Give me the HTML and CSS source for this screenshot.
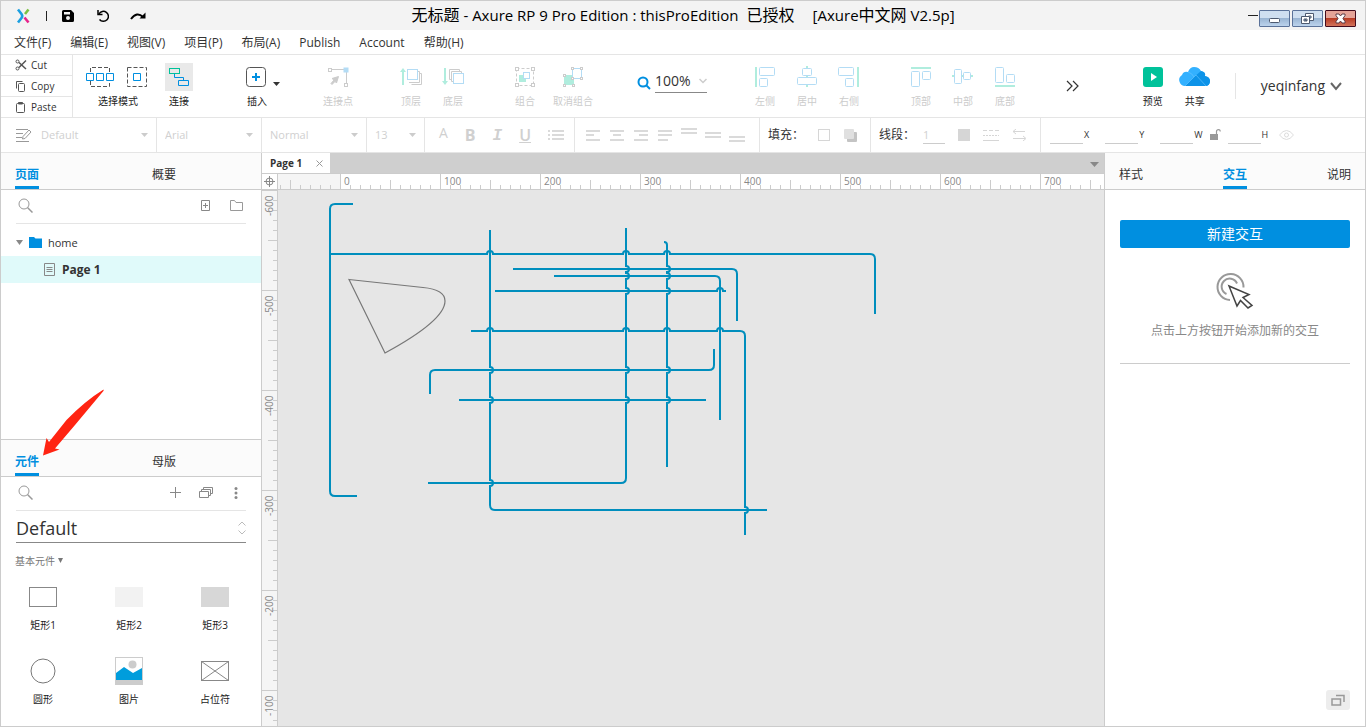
FILE: index.html
```
<!DOCTYPE html>
<html lang="zh-CN">
<head>
<meta charset="utf-8">
<title>无标题 - Axure RP 9 Pro Edition</title>
<link rel="stylesheet" href="styles.css">
</head>
<body>
<div class="app">
  <header class="titlebar">
    <div class="quick">
      <svg class="logo" width="14" height="16" viewBox="0 0 14 16" fill="none" stroke-width="2.600"><path d="M2 1.500L5.500 6Q7 8 5.500 10L2 14.500" stroke="#1b9fe0"/><path d="M12.500 1.500L9 6" stroke="#7bc143"/><path d="M8.500 9.500L12.500 14.500" stroke="#e6248c"/></svg>
      <span class="quick-sep"></span>
      <button aria-label="保存"><svg width="12" height="12" viewBox="0 0 12 12"><path fill-rule="evenodd" d="M1.500 0H9L12 3V10.500Q12 12 10.500 12H1.500Q0 12 0 10.500V1.500Q0 0 1.500 0ZM2 2V4.500H8V2ZM6 6A2 2 0 1 0 6 10A2 2 0 1 0 6 6Z"/></svg></button>
      <button aria-label="撤销"><svg width="14" height="14" viewBox="0 0 14 14" fill="none" stroke="#000" stroke-width="1.500"><path d="M4 5A5 5 0 1 1 4.500 10.500"/><path d="M3 1V5.500H7.500"/></svg></button>
      <button aria-label="重做"><svg width="16" height="14" viewBox="0 0 16 14" fill="none" stroke="#000" stroke-width="2"><path d="M1 10Q7 2 13 8"/><path d="M15.500 3.500V9.500H9.500Z" fill="#000" stroke="none"/></svg></button>
    </div>
    <h1 class="title"><span>无标题</span><span class="latin">- Axure RP 9 Pro Edition : thisProEdition</span><span class="licence">已授权</span><span class="latin">[Axure<span class="han">中文网</span> V2.5p]</span></h1>
    <div class="window-buttons">
      <span class="dash"></span>
      <button class="win" aria-label="最小化"><svg width="29" height="15" viewBox="0 0 29 15"><rect x="9.500" y="7.500" width="10" height="4" rx="1" fill="#fff" stroke="#4d5a70"/></svg></button>
      <button class="win" aria-label="还原"><svg width="29" height="15" viewBox="0 0 29 15" fill="#fff" stroke="#4d5a70"><path fill-rule="evenodd" d="M12.500 2.500H20.500V9.500H12.500ZM15.500 5V7H18V5Z"/><path fill-rule="evenodd" d="M8.500 5.500H16.500V12.500H8.500ZM11 8V10H14V8Z"/></svg></button>
      <button class="win win-close" aria-label="关闭"><svg width="29" height="15" viewBox="0 0 29 15"><path d="M10 3H13L14.500 5L16 3H19V4.500L17 7.500L19 10.500V12H16L14.500 10L13 12H10V10.500L12 7.500L10 4.500Z" fill="#fff" stroke="#5b3a45"/></svg></button>
    </div>
  </header>

  <nav class="menubar">
    <button>文件(F)</button><button>编辑(E)</button><button>视图(V)</button><button>项目(P)</button><button>布局(A)</button><button>Publish</button><button>Account</button><button>帮助(H)</button>
  </nav>

  <div class="toolbar">
    <div class="clipboard">
      <button><svg width="12" height="12" viewBox="0 0 12 12" fill="none" stroke="#555"><circle cx="2.500" cy="2.500" r="1.500"/><circle cx="2.500" cy="9.500" r="1.500"/><path d="M4 3.500L11 10M4 8.500L11 1.500" stroke-width="1.500"/></svg>Cut</button>
      <button><svg width="12" height="12" viewBox="0 0 12 12" fill="none" stroke="#555"><path d="M1.500 8.500V1.500H7.500"/><rect x="3.500" y="3.500" width="6" height="8" rx="1"/></svg>Copy</button>
      <button><svg width="12" height="12" viewBox="0 0 12 12" fill="none" stroke="#555"><rect x="1.500" y="2.500" width="8" height="9" rx="1"/><path d="M3.500 3V1.500H7.500V3Z" fill="#555"/></svg>Paste</button>
    </div>
    <div class="tools">
      <button class="tool tool-wide"><svg width="68" height="28" viewBox="84 63 68 28" fill="none"><g stroke="#555" stroke-dasharray="4 2"><path d="M90.500 72V67.500H109.500V72M90.500 81V86.500H109.500V81M127.500 67.500H146.500V86.500H127.500Z"/></g><g stroke="#008fe0" fill="#fff"><path d="M86.500 73.500H93.500V80.500H86.500ZM96.500 73.500H103.500V80.500H96.500ZM106.500 73.500H113.500V80.500H106.500ZM133.500 73.500H140.500V80.500H133.500Z"/></g></svg>选择模式</button>
      <button class="tool"><svg class="pressed" width="28" height="28" viewBox="165 63 28 28" fill="none"><rect x="169.500" y="68.500" width="10" height="5" stroke="#00c29a"/><path d="M174.500 74V77.500H183.500V80M178.500 80.500H188.500V85.500H178.500Z" stroke="#008fe0"/></svg>连接</button>
      <button class="tool tool-insert"><svg width="42" height="28" viewBox="236 63 42 28" fill="none"><rect x="246.500" y="67.500" width="19" height="19" rx="3" stroke="#555"/><path d="M256 73V81M252 77H260" stroke="#008fe0" stroke-width="2"/><path d="M273 82H280L276.500 86Z" fill="#333"/></svg>插入</button>
      <button class="tool tool-point" disabled><svg width="28" height="28" viewBox="324 63 28 28" fill="none" stroke="#ccc"><path d="M332 69.500H344M346.500 72V83"/><rect x="328.500" y="68.500" width="3" height="3"/><rect x="344.500" y="83.500" width="3" height="3"/><rect x="344" y="68" width="4" height="4" fill="#b3dcf5" stroke="#b3dcf5"/><path d="M338.500 76.500L336.500 83L335 81.500L332 84.500L331 83.500L334 80L332 78.500Z" fill="#ccc"/></svg>连接点</button>
      <div class="toolset">
        <button class="tool" disabled><svg width="28" height="28" viewBox="397 63 28 28" fill="none"><path d="M403 85V71" stroke="#b0edde" stroke-width="2"/><path d="M400 72L403 68L406 72Z" fill="#b0edde"/><path d="M409 82.500H419.500V71.500H418M411.500 84.500H421.500V73.500H420" stroke="#ccc"/><rect x="407.500" y="69.500" width="10" height="10" stroke="#b3dcf5"/></svg>顶层</button>
        <button class="tool" disabled><svg width="28" height="28" viewBox="439 63 28 28" fill="none"><path d="M445 68V82" stroke="#b0edde" stroke-width="2"/><path d="M442 81L445 85L448 81Z" fill="#b0edde"/><path d="M451 79.500H449.500V69.500H459.500V71M453 81.500H451.500V71.500H461.500V73" stroke="#ccc"/><rect x="453.500" y="73.500" width="10" height="10" stroke="#b3dcf5"/></svg>底层</button>
      </div>
      <div class="toolset toolset-group">
        <button class="tool" disabled><svg width="28" height="28" viewBox="511 63 28 28" fill="none"><rect x="516.500" y="68.500" width="17" height="17" stroke="#ccc" stroke-dasharray="3 2"/><g fill="#fff" stroke="#ccc"><rect x="515.500" y="67.500" width="3" height="3"/><rect x="531.500" y="67.500" width="3" height="3"/><rect x="515.500" y="83.500" width="3" height="3"/><rect x="531.500" y="83.500" width="3" height="3"/></g><rect x="519" y="75" width="7" height="7" fill="#b0edde"/><rect x="523.500" y="72.500" width="6" height="6" fill="#fff" stroke="#b3dcf5"/></svg>组合</button>
        <button class="tool" disabled><svg width="28" height="28" viewBox="559 63 28 28" fill="none"><rect x="564" y="75" width="10" height="10" fill="#b0edde"/><rect x="572.500" y="68.500" width="9" height="10" fill="#fff" stroke="#b3dcf5"/><g fill="#fff" stroke="#ccc"><rect x="571.500" y="67.500" width="2" height="2"/><rect x="580.500" y="67.500" width="2" height="2"/><rect x="580.500" y="77.500" width="2" height="2"/><rect x="571.500" y="77.500" width="2" height="2"/><rect x="563.500" y="74.500" width="2" height="2"/><rect x="563.500" y="84.500" width="2" height="2"/><rect x="572.500" y="84.500" width="2" height="2"/></g></svg>取消组合</button>
      </div>
      <label class="zoom"><svg width="14" height="14" viewBox="0 0 14 14" fill="none" stroke="#008fe0" stroke-width="2"><circle cx="6" cy="6" r="4.500"/><path d="M9 9L13 13"/></svg>
        <span class="pick"><select aria-label="缩放"><option>100%</option></select><svg width="8" height="6" viewBox="0 0 8 6" fill="none" stroke="#ccc" stroke-width="1.500"><path d="M.5 1L4 4.500L7.500 1"/></svg></span></label>
      <div class="toolset">
        <button class="tool" disabled><svg width="28" height="28" viewBox="751 63 28 28" fill="none"><path d="M756 67V87" stroke="#b0edde" stroke-width="2"/><g stroke="#b3dcf5"><rect x="759.500" y="67.500" width="15" height="8" rx="1"/><rect x="759.500" y="78.500" width="8" height="8" rx="1"/></g></svg>左侧</button>
        <button class="tool" disabled><svg width="28" height="28" viewBox="793 63 28 28" fill="none"><path d="M807 66V87" stroke="#b0edde" stroke-width="2"/><g fill="#fff" stroke="#b3dcf5"><rect x="802.500" y="68.500" width="9" height="7" rx="1"/><rect x="797.500" y="77.500" width="19" height="7" rx="1"/></g></svg>居中</button>
        <button class="tool" disabled><svg width="28" height="28" viewBox="835 63 28 28" fill="none"><path d="M858 67V87" stroke="#b0edde" stroke-width="2"/><g stroke="#b3dcf5"><rect x="838.500" y="67.500" width="15" height="8" rx="1"/><rect x="845.500" y="78.500" width="8" height="8" rx="1"/></g></svg>右侧</button>
      </div>
      <div class="toolset toolset-vertical">
        <button class="tool" disabled><svg width="28" height="28" viewBox="907 63 28 28" fill="none"><path d="M911 68H931" stroke="#b0edde" stroke-width="2"/><g stroke="#b3dcf5"><rect x="911.500" y="71.500" width="8" height="15" rx="1"/><rect x="922.500" y="71.500" width="8" height="8" rx="1"/></g></svg>顶部</button>
        <button class="tool" disabled><svg width="28" height="28" viewBox="949 63 28 28" fill="none"><path d="M952 76H973" stroke="#b0edde" stroke-width="2"/><g fill="#fff" stroke="#b3dcf5"><rect x="954.500" y="69.500" width="7" height="14" rx="1"/><rect x="963.500" y="72.500" width="7" height="7" rx="1"/></g></svg>中部</button>
        <button class="tool" disabled><svg width="28" height="28" viewBox="991 63 28 28" fill="none"><path d="M995 86H1015" stroke="#b0edde" stroke-width="2"/><g stroke="#b3dcf5"><rect x="995.500" y="67.500" width="8" height="15" rx="1"/><rect x="1006.500" y="74.500" width="8" height="8" rx="1"/></g></svg>底部</button>
      </div>
      <button class="more" aria-label="更多"><svg width="14" height="12" viewBox="0 0 14 12" fill="none" stroke="#333" stroke-width="1.200"><path d="M1 1L6 6L1 11M7 1L12 6L7 11"/></svg></button>
    </div>
    <div class="account">
      <button class="tool"><svg width="28" height="28" viewBox="0 0 28 28"><rect x="4" y="4" width="20" height="20" rx="3" fill="#00c29a"/><path d="M12 10V18L18 14Z" fill="#fff"/></svg>预览</button>
      <button class="tool"><svg width="32" height="28" viewBox="0 0 32 28"><path d="M7 23A6 6 0 0 1 3 12A5 5 0 0 1 9 9Q11 4 15 4Q20 4 22 8Q27 9 26 13Q31 14 31 18Q31 23 26 23Z" fill="#33b1ff"/><path d="M6 23L15 14L22 8Q27 9 26 13Q31 14 31 18Q31 23 26 23Z" fill="#0d93e8"/><path d="M6 23L17 12L27 23M9 9Q13 10 15 14" fill="none" stroke="#6cc6ff" stroke-width=".6"/></svg>共享</button>
      <button class="user">yeqinfang<svg width="12" height="9" viewBox="0 0 12 9" fill="none" stroke="#666" stroke-width="2"><path d="M1 1L6 7L11 1"/></svg></button>
    </div>
  </div>

  <div class="formatbar">
    <div class="cell cell-style"><svg width="16" height="14" viewBox="0 0 16 14" fill="none" stroke="#999"><path d="M0 1.500H12M0 5.500H7M0 9.500H6M0 13.500H13M6.500 11L7 8.500L13 2L15 4L9 10.500Z"/></svg><span class="pick"><select aria-label="样式" disabled><option>Default</option></select><svg class="caret" width="7" height="4" viewBox="0 0 7 4"><path d="M0 0H7L3.500 4Z"/></svg></span></div>
    <div class="cell cell-font"><span class="pick"><select aria-label="字体" disabled><option>Arial</option></select><svg class="caret" width="7" height="4" viewBox="0 0 7 4"><path d="M0 0H7L3.500 4Z"/></svg></span></div>
    <div class="cell cell-font"><span class="pick"><select aria-label="字重" disabled><option>Normal</option></select><svg class="caret" width="7" height="4" viewBox="0 0 7 4"><path d="M0 0H7L3.500 4Z"/></svg></span></div>
    <div class="cell cell-size"><span class="pick"><select aria-label="字号" disabled><option>13</option></select><svg class="caret" width="7" height="4" viewBox="0 0 7 4"><path d="M0 0H7L3.500 4Z"/></svg></span></div>
    <div class="cell cell-letters"><button disabled class="color">A</button><button disabled><b>B</b></button><button disabled><i>I</i></button><button disabled><u>U</u></button><button disabled aria-label="列表"><svg width="16" height="12" viewBox="0 0 16 12" stroke="#dadada" stroke-width="2"><path d="M0 2H2M4 2H16M0 6H2M4 6H16M0 10H2M4 10H16"/></svg></button></div>
    <div class="cell cell-align">
      <button disabled aria-label="左对齐"><svg width="16" height="14" viewBox="0 0 16 14"><path d="M1 3H15M1 7H9M1 12H15"/></svg></button>
      <button disabled aria-label="居中对齐"><svg width="16" height="14" viewBox="0 0 16 14"><path d="M1 3H15M4 7H12M1 12H15"/></svg></button>
      <button disabled aria-label="右对齐"><svg width="16" height="14" viewBox="0 0 16 14"><path d="M1 3H15M6 7H15M1 12H15"/></svg></button>
      <button disabled aria-label="两端对齐"><svg width="16" height="14" viewBox="0 0 16 14"><path d="M1 3H15M1 7H15M1 12H11"/></svg></button>
      <button disabled aria-label="顶端"><svg width="16" height="14" viewBox="0 0 16 14"><path d="M0 1H16M0 5H16"/></svg></button>
      <button disabled aria-label="中部"><svg width="16" height="14" viewBox="0 0 16 14"><path d="M0 5H16M0 9H16"/></svg></button>
      <button disabled aria-label="底端"><svg width="16" height="14" viewBox="0 0 16 14"><path d="M0 9H16M0 13H16"/></svg></button>
    </div>
    <div class="cell cell-fill"><span>填充：</span><button disabled aria-label="填充颜色"><svg width="12" height="12" viewBox="0 0 12 12"><rect x=".5" y=".5" width="11" height="11" fill="#fff" stroke="#d6d6d6"/></svg></button><button disabled aria-label="阴影"><svg width="13" height="13" viewBox="0 0 13 13"><rect x="3" y="3" width="10" height="10" rx="1" fill="#c4c4c4"/><rect width="10" height="10" rx="1" fill="#e0e0e0"/></svg></button></div>
    <div class="cell cell-line"><label for="line-width">线段：</label><input id="line-width" class="line-width" value="1" disabled><button disabled aria-label="线段颜色"><svg width="12" height="12" viewBox="0 0 12 12"><rect width="12" height="12" fill="#d6d6d6"/></svg></button><button disabled aria-label="线型"><svg width="16" height="12" viewBox="0 0 16 12" stroke="#d6d6d6"><path d="M0 1.500H16" stroke-dasharray="4 2"/><path d="M0 6.500H16" stroke-dasharray="2 1"/><path d="M0 11.500H16"/></svg></button><button disabled aria-label="箭头"><svg width="15" height="12" viewBox="0 0 15 12" fill="none" stroke="#d6d6d6"><path d="M13 2.500H1M4 0L1 2.500L4 5M1 9.500H13M11 7L14 9.500L11 12"/></svg></button></div>
    <div class="cell cell-place">
      <label><input disabled>X</label><label><input disabled>Y</label><label><input disabled>W</label>
      <svg width="11" height="12" viewBox="0 0 11 12"><rect y="5" width="8" height="6" fill="#999"/><path d="M6.500 5V2.500Q6.500 .7 8.500 .7T10 2.500" fill="none" stroke="#999" stroke-width="1.200"/></svg>
      <label><input disabled>H</label>
      <svg class="eye" width="15" height="10" viewBox="0 0 15 10" fill="none" stroke="#dcdcdc"><path d="M.5 5Q7.500 -4 14.500 5Q7.500 14 .5 5Z"/><circle cx="7.500" cy="5" r="2"/></svg>
    </div>
  </div>

  <main class="workspace">
    <aside class="left">
      <section class="pages">
        <div class="tabs"><button class="tab active">页面</button><button class="tab">概要</button></div>
        <div class="search"><svg width="16" height="16" viewBox="0 0 16 16" fill="none" stroke="#999"><circle cx="7" cy="6" r="5"/><path d="M10.500 9.500L15.500 14.500" stroke-width="1.500"/></svg><input type="search" aria-label="搜索页面">
          <button aria-label="添加页面"><svg width="16" height="14" viewBox="0 0 16 14" fill="none" stroke="#888"><path d="M4.500 1.500H12.500V11.500H4.500ZM8.500 4V9M6 6.500H11"/></svg></button>
          <button aria-label="添加文件夹"><svg width="14" height="14" viewBox="0 0 14 14" fill="none" stroke="#999"><path d="M.5 1.500H4.500L6 3.500H12.500V11.500H.5Z"/></svg></button></div>
        <ul class="tree">
          <li><svg width="7" height="5" viewBox="0 0 7 5"><path d="M0 0H7L3.500 5Z" fill="#888"/></svg><svg class="folder" width="13" height="11" viewBox="0 0 13 11"><path d="M0 0H5L6.500 1.500H13V11H0Z" fill="#008fe0"/></svg>home</li>
          <li class="selected"><svg width="11" height="13" viewBox="0 0 11 13" fill="none" stroke="#888"><path d="M.5 .5H10.500V12.500H.5ZM2.500 4.500H8.500M2.500 6.500H8.500M2.500 8.500H8.500"/></svg>Page 1</li>
        </ul>
      </section>
      <section class="library">
        <div class="tabs"><button class="tab active">元件</button><button class="tab">母版</button>
          <svg class="pointer" width="62" height="67" viewBox="43 389 62 67"><path d="M103.500 389.500Q104 391 103 391.500L75 425L55 448.500L59.500 449.500L43 455.500L46.500 438L49 442L66.500 420Q85 401 103.500 389.500Z" fill="#ff2412"/></svg></div>
        <div class="search"><svg width="16" height="16" viewBox="0 0 16 16" fill="none" stroke="#999"><circle cx="7" cy="6" r="5"/><path d="M10.500 9.500L15.500 14.500" stroke-width="1.500"/></svg><input type="search" aria-label="搜索元件">
          <button aria-label="添加"><svg width="12" height="12" viewBox="0 0 12 12" stroke="#888"><path d="M5.500 0V11M0 5.500H11"/></svg></button>
          <button aria-label="元件库"><svg width="14" height="12" viewBox="0 0 14 12" fill="none" stroke="#888"><path d="M.5 4.500H9.500V10.500H.5ZM2.500 4V2.500H11.500V8.500H10M4.500 2V.5H13.500V6.500H12"/></svg></button>
          <button aria-label="选项"><svg width="14" height="12" viewBox="0 0 14 12" fill="#888"><circle cx="6" cy="1.500" r="1.500"/><circle cx="6" cy="6" r="1.500"/><circle cx="6" cy="10.500" r="1.500"/></svg></button></div>
        <div class="pick library-pick"><select aria-label="元件库"><option>Default</option></select><svg width="8" height="14" viewBox="0 0 8 14" fill="none" stroke="#bbb"><path d="M.5 4.500L4 1L7.500 4.500M.5 9.500L4 13L7.500 9.500"/></svg></div>
        <button class="category">基本元件<svg width="5" height="5" viewBox="0 0 5 5"><path d="M0 0H5L2.500 5Z" fill="#777"/></svg></button>
        <div class="widgets">
          <figure><svg width="28" height="28" viewBox="0 0 28 28"><rect x=".5" y="4.500" width="27" height="19" fill="#fff" stroke="#888"/></svg><figcaption>矩形1</figcaption></figure>
          <figure><svg width="28" height="28" viewBox="0 0 28 28"><rect y="4" width="28" height="20" fill="#f2f2f2"/></svg><figcaption>矩形2</figcaption></figure>
          <figure><svg width="28" height="28" viewBox="0 0 28 28"><rect y="4" width="28" height="20" fill="#d7d7d7"/></svg><figcaption>矩形3</figcaption></figure>
          <figure><svg width="28" height="28" viewBox="0 0 28 28"><circle cx="14" cy="14" r="12" fill="#fff" stroke="#777"/></svg><figcaption>圆形</figcaption></figure>
          <figure><svg width="28" height="28" viewBox="0 0 28 28"><rect x=".5" y=".5" width="27" height="27" fill="#fff" stroke="#ccc"/><circle cx="17.500" cy="7.500" r="4" fill="#ccc"/><path d="M1 16L9 10L18 16L27 11V23H1Z" fill="#009ddc"/><rect y="23" width="28" height="5" fill="#ccc"/></svg><figcaption>图片</figcaption></figure>
          <figure><svg width="28" height="28" viewBox="0 0 28 28" fill="#fff" stroke="#888"><rect x=".5" y="4.500" width="27" height="19"/><path d="M.5 4.500L27.500 23.500M27.500 4.500L.5 23.500"/></svg><figcaption>占位符</figcaption></figure>
        </div>
      </section>
    </aside>

    <section class="editor">
      <div class="doc-tabs"><button class="doc-tab">Page 1<svg width="7" height="7" viewBox="0 0 7 7" stroke="#999"><path d="M.5 .5L6.500 6.500M6.500 .5L.5 6.500"/></svg></button><svg class="doc-more" width="9" height="5" viewBox="0 0 9 5"><path d="M0 0H9L4.500 5Z" fill="#888"/></svg></div>
      <div class="sheet">
        <div class="origin"><svg width="11" height="11" viewBox="0 0 11 11" fill="none" stroke="#888"><circle cx="5.500" cy="5.500" r="3.500"/><path d="M5.500 0V11M0 5.500H11"/></svg></div>
        <div class="ruler-x"><span class="lead"></span><span>0</span><span>100</span><span>200</span><span>300</span><span>400</span><span>500</span><span>600</span><span>700</span></div>
        <div class="ruler-y"><span>-600</span><span>-500</span><span>-400</span><span>-300</span><span>-200</span><span>-100</span></div>
        <div class="canvas">
          <svg class="drawing" width="100%" height="100%"><g transform="translate(-278 -190)" fill="none" stroke="#008ebd" stroke-width="2">
            <path d="M353 204H335Q330 204 330 209V491Q330 496 335 496H357"/>
            <path d="M330 254H487C487 250 493 250 493 254H623C623 250 629 250 629 254H664C664 250 670 250 670 254H870Q875 254 875 259V314"/>
            <path d="M490 230V367C494 367 494 373 490 373V397C494 397 494 403 490 403V480C494 480 494 486 490 486V505Q490 510 495 510H767"/>
            <path d="M626 228V266C630 266 630 272 626 272V273C630 273 630 279 626 279V288C630 288 630 294 626 294V367C630 367 630 373 626 373V397C630 397 630 403 626 403V478Q626 483 621 483H428"/>
            <path d="M664 242Q667 242 667 245V266C671 266 671 272 667 272V273C671 273 671 279 667 279V288C671 288 671 294 667 294V367C671 367 671 373 667 373V397C671 397 671 403 667 403V467"/>
            <path d="M513 269H732Q737 269 737 274V321"/>
            <path d="M554 276H715Q720 276 720 281V420"/>
            <path d="M495 291H717C717 287 723 287 723 291H726"/>
            <path d="M471 331H487C487 327 493 327 493 331H623C623 327 629 327 629 331H664C664 327 670 327 670 331H717C717 327 723 327 723 331H740Q745 331 745 336V507C749 507 749 513 745 513V535"/>
            <path d="M430 394V375Q430 370 435 370H709Q714 370 714 365V349"/>
            <path d="M459 400H706"/>
            <path d="M349 279.500L423 287.500C440 289 445 295 445 301C445 315 420 334 385 353Z" stroke="#777" stroke-width="1.200"/>
          </g></svg>
        </div>
      </div>
    </section>

    <aside class="right">
      <div class="tabs tabs-even"><button class="tab">样式</button><button class="tab active">交互</button><button class="tab">说明</button></div>
      <div class="interactions">
        <button class="primary">新建交互</button>
        <svg width="38" height="38" viewBox="1216 272 38 38" fill="none"><g stroke="#999" stroke-width="2"><path d="M1230 300A13 13 0 1 1 1243.500 287.500"/><path d="M1226.500 294A8 8 0 1 1 1237 283.500"/></g><path d="M1229 286L1249 294.500L1243 297.500L1252 305.500L1248 308L1240.500 300.500L1237 306Z" fill="#fff" stroke="#444" stroke-width="1.500"/></svg>
        <p>点击上方按钮开始添加新的交互</p>
      </div>
      <button class="dock" aria-label="浮动面板"><svg width="14" height="12" viewBox="0 0 14 12" fill="none" stroke="#999" stroke-width="1.500"><path d="M1 5H9.500V11H1ZM5 1.500H13V8"/></svg></button>
    </aside>
  </main>
</div>
</body>
</html>
```
FILE: styles.css
```
* { box-sizing: border-box; }
body { margin: 0; font: 12px/16px "Open Sans", "Noto Sans CJK SC", sans-serif; color: #333; }
button, input, select { font: inherit; color: inherit; background: none; border: 0; padding: 0; margin: 0; border-radius: 0; }
svg { display: block; flex: none; }
select { appearance: none; opacity: 1; width: 100%; }
.app { height: 100vh; display: flex; flex-direction: column; border: 1px solid #ccc; overflow: hidden; background: #fff; }

.titlebar { flex: none; height: 29px; background: #f3f3f3; display: grid; grid-template-columns: 1fr auto 1fr; align-items: center; }
.quick { display: flex; align-items: center; padding-left: 15px; gap: 20px; }
.quick button + button { margin-left: 1px; }
.quick-sep { width: 1px; height: 10px; background: #222; margin: 0 -5px 0 -4px; }
.title { margin: 0; padding-bottom: 2px; font-size: 16px; line-height: 20px; font-weight: 400; color: #000; display: flex; gap: 4px; white-space: nowrap; }
.latin { font-size: 15px; }
.han { font-size: 16px; }
.licence { margin: 0 14px 0 4px; }
.window-buttons { display: flex; justify-content: flex-end; align-self: end; gap: 2px; padding: 0 9px 3px 0; }
.dash { width: 10px; height: 1px; background: #222; margin: 5px -1px 0 0; }
.win { border: 1px solid #5b7299; border-radius: 1px; background: linear-gradient(#cfdff0 45%, #9ab5d3 50%, #bcd3ec); }
.win-close { border-color: #430b1c; background: linear-gradient(#e5a397 45%, #b93c24 50%, #d2735b); }

.menubar { flex: none; height: 25px; border-bottom: 1px solid #e5e5e5; display: flex; gap: 19px; padding: 2px 0 0 13px; }

.toolbar { flex: none; height: 63px; display: flex; border-bottom: 1px solid #e5e5e5; }
.clipboard { width: 72px; border-right: 1px solid #e5e5e5; display: grid; grid-template-rows: 20px 21px 21px; font-size: 10px; line-height: 18px; }
.clipboard button { display: flex; align-items: center; gap: 4px; padding-left: 14px; }
.clipboard button + button { border-top: 1px solid #e5e5e5; }
.tools { display: flex; padding-left: 11px; flex: 1; min-width: 0; }
.tool { width: 42px; display: flex; flex-direction: column; align-items: center; justify-content: flex-start; gap: 3px; padding-top: 8px; font-size: 10px; line-height: 14px; white-space: nowrap; color: #222; }
.tool svg { overflow: visible; }
.tool:disabled { color: #ccc; }
.tool-wide { width: 68px; }
.tool-wide + .tool { margin-left: 6px; }
.tool + .tool-insert { margin-left: 36px; }
.tool + .tool-point { margin: 0 31px 0 39px; }
.pressed { background: #e9e9e9; }
.toolset { display: flex; }
.toolset-group { margin: 0 40px 0 27px; }
.toolset-group .tool { width: 48px; }
.toolset-vertical { margin: 0 40px 0 30px; }
.zoom { width: 70px; height: 20px; margin: 18px 37px 0 0; display: flex; align-items: center; gap: 4px; font-size: 14px; }
.pick { position: relative; display: flex; align-items: center; flex: 1; }
.pick svg { position: absolute; right: 0; pointer-events: none; }
.zoom .pick { border-bottom: 1px solid #888; height: 20px; padding-bottom: 3px; }
.account { display: flex; }
.user { font-size: 14px; display: flex; align-items: center; gap: 5px; margin: 18px 23px 18px 19px; padding-left: 25px; border-left: 1px solid #e5e5e5; }

.formatbar { flex: none; height: 35px; display: flex; border-bottom: 1px solid #e5e5e5; }
.cell { display: flex; align-items: center; border-right: 1px solid #e5e5e5; padding: 0 8px; white-space: nowrap; }
.cell select, .cell button, .line-width { color: #d0d0d0; font-size: 11px; }
.caret { fill: #ccc; }
.cell-style { width: 156px; gap: 9px; padding-left: 15px; }
.cell-font { width: 105px; }
.cell-size { width: 58px; }
.cell-letters { width: 150px; justify-content: space-between; padding: 0 10px 0 14px; }
.cell-letters button { font-size: 16px; }
.cell-letters .color { font-size: 14px; padding-bottom: 4px; }
.cell-letters i { font-family: "Liberation Mono", monospace; font-weight: 700; }
.cell-letters u { font-weight: 600; }
.cell-align { width: 185px; justify-content: space-between; padding: 0 14px 0 10px; }
.cell-align svg { stroke: #dadada; stroke-width: 2; }
.cell-fill { width: 111px; gap: 14px; }
.cell-line { width: 170px; gap: 13px; }
.cell-line label { flex: none; margin-right: -5px; }
.line-width { width: 22px; border-bottom: 1px solid #ccc; }
.cell-place { border: 0; font-size: 9px; padding-left: 9px; }
.cell-place label { display: flex; align-items: center; }
.cell-place input { width: 33px; height: 18px; border-bottom: 1px solid #ccc; margin-right: 1px; }
.cell-place label + label { margin-left: 16px; }
.cell-place svg { margin: 0 7px; }
.cell-place .eye { margin-left: 11px; }

.workspace { flex: 1; min-height: 0; display: flex; }
.left { width: 261px; border-right: 1px solid #ccc; display: flex; flex-direction: column; }
.pages { flex: 1; min-height: 0; }
.library { height: 287px; border-top: 1px solid #ccc; }
.tabs { position: relative; height: 37px; padding: 0 14px; background: #fbfbfb; border-bottom: 1px solid #ccc; display: grid; grid-template-columns: 137px auto; justify-content: start; justify-items: start; align-items: end; }
.tab { height: 26px; line-height: 24px; border-bottom: 3px solid transparent; }
.tab.active { font-weight: 700; color: #008fe0; border-color: #008fe0; }
.pointer { position: absolute; left: 42px; bottom: 20px; z-index: 1; pointer-events: none; }
.search { height: 34px; margin: 0 15px; padding: 0 2px 2px 0; border-bottom: 1px solid #e5e5e5; display: flex; align-items: center; gap: 16px; }
.search svg { margin-left: 1px; }
.search input { flex: 1; min-width: 0; height: 24px; }
.tree { list-style: none; margin: 5px 0 0; padding: 0; font-size: 11px; }
.tree li { height: 27px; display: flex; align-items: center; gap: 6px; padding-left: 15px; }
.tree .selected { background: #e0fafa; font-weight: 700; font-size: 12px; gap: 7px; padding-left: 43px; }
.library-pick { margin: 0 15px; height: 32px; padding-top: 3px; border-bottom: 1px solid #888; font-size: 18px; line-height: 24px; }
.category { display: flex; gap: 3px; margin: 10px 14px 0; font-size: 10px; color: #777; }
.category svg { margin-top: 5px; }
.widgets { display: grid; grid-template-columns: repeat(3, 84px); gap: 26px 2px; margin-top: 14px; }
.widgets figure { margin: 0; display: flex; flex-direction: column; align-items: center; gap: 8px; font-size: 10px; line-height: 12px; color: #222; }

.editor { flex: 1; min-width: 0; display: flex; flex-direction: column; }
.doc-tabs { height: 21px; background: #cfcfcf; border-bottom: 1px solid #ccc; display: flex; justify-content: space-between; align-items: center; padding-right: 5px; }
.doc-more { margin-top: 3px; }
.doc-tab { height: 20px; width: 68px; padding: 0 7px 0 8px; background: #fff; font-size: 10px; font-weight: 700; display: flex; align-items: center; justify-content: space-between; }
.sheet { flex: 1; min-height: 0; display: grid; grid-template: 16px minmax(0, 1fr) / 16px minmax(0, 1fr); }
.origin { display: grid; place-items: center; border-right: 1px solid #ccc; border-bottom: 1px solid #ccc; }
.ruler-x, .ruler-y { display: flex; overflow: hidden; font-size: 10px; line-height: 14px; color: #888; background: #fff; }
.ruler-x { border-bottom: 1px solid #ccc; }
.ruler-x span { flex: 0 0 100px; height: 15px; padding-left: 4px; background: linear-gradient(#ccc, #ccc) 0 0 / 1px 15px no-repeat, linear-gradient(#ccc, #ccc) 50px 100% / 1px 9px no-repeat, repeating-linear-gradient(to right, #ccc 0 1px, transparent 1px 10px) 0 100% / 100px 4px no-repeat; }
.ruler-x .lead { flex-basis: 62px; background: linear-gradient(#ccc, #ccc) 12px 100% / 1px 9px no-repeat, repeating-linear-gradient(to right, #ccc 0 1px, transparent 1px 10px) -38px 100% / 100px 4px no-repeat, #f5f5f5; }
.ruler-y { flex-direction: column; background: #f5f5f5; border-right: 1px solid #ccc; }
.ruler-y span { flex: 0 0 100px; width: 15px; padding-bottom: 6px; writing-mode: vertical-rl; transform: rotate(180deg); text-align: right; background: linear-gradient(#ccc, #ccc) 0 100% / 15px 1px no-repeat, linear-gradient(#ccc, #ccc) 0 49px / 9px 1px no-repeat, repeating-linear-gradient(to top, #ccc 0 1px, transparent 1px 10px) 0 100% / 4px 100px no-repeat; }
.canvas { background: #e6e6e6; overflow: hidden; }

.right { position: relative; width: 261px; border-left: 1px solid #ccc; }
.tabs-even { grid-template-columns: auto auto auto; justify-content: space-between; }
.interactions { margin: 30px 15px 0; border-bottom: 1px solid #ccc; display: flex; flex-direction: column; align-items: center; }
.primary { width: 100%; height: 28px; border-radius: 2px; background: #008fe0; color: #fff; font-size: 14px; margin-bottom: 24px; }
.interactions p { margin: 13px 0 24px; color: #888; }
.dock { position: absolute; right: 15px; bottom: 16px; width: 24px; height: 20px; border-radius: 3px; background: #ededed; display: grid; place-items: center; }
```
